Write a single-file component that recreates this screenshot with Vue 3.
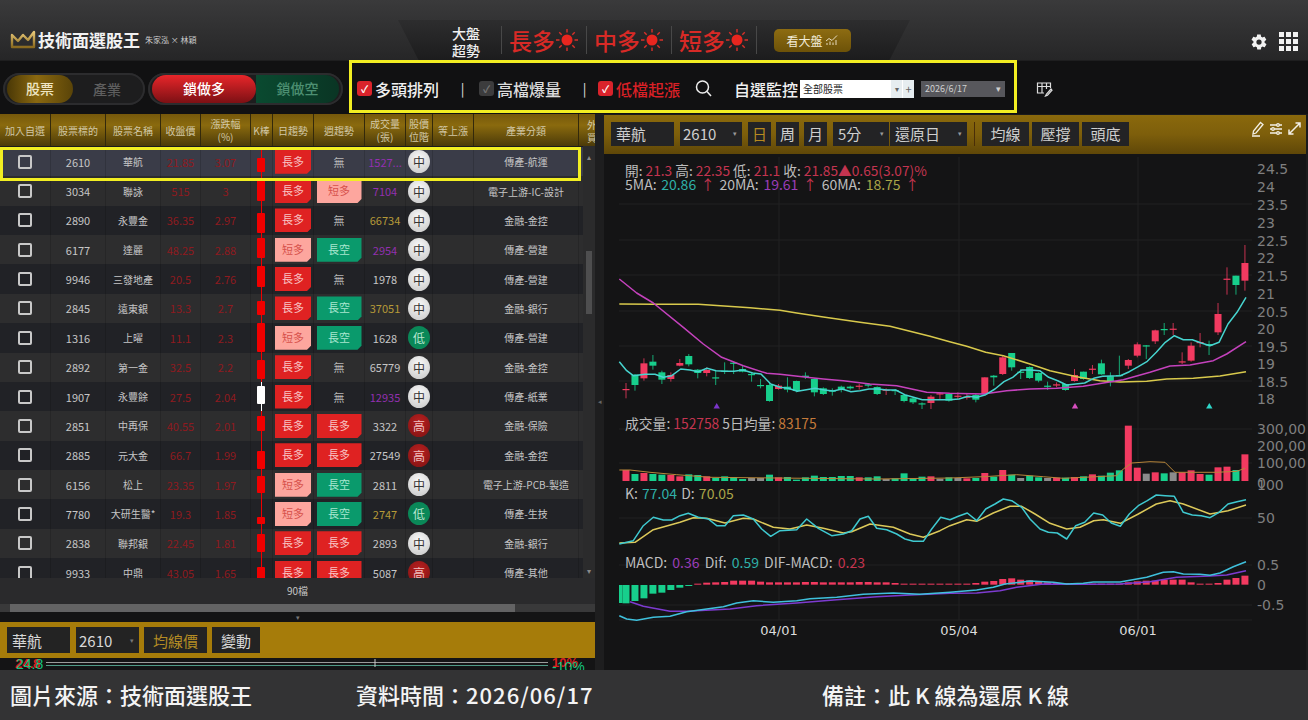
<script setup>
const rows = [
  { code: "2610", name: "華航", close: "21.85", pct: "3.07", k: [11, 14], day: "長多", week: "無", vol: "1527...", volc: "pu", pos: "中", ind: "傳產-航運", sel: true },
  { code: "3034", name: "聯詠", close: "515", pct: "3", k: [4, 21], day: "長多", week: "短多", vol: "7104", volc: "pu", pos: "中", ind: "電子上游-IC-設計" },
  { code: "2890", name: "永豐金", close: "36.35", pct: "2.97", k: [7, 20], day: "長多", week: "無", vol: "66734", volc: "go", pos: "中", ind: "金融-金控" },
  { code: "6177", name: "達麗", close: "48.25", pct: "2.88", k: [3, 20], day: "短多", week: "長空", vol: "2954", volc: "pu", pos: "中", ind: "傳產-營建" },
  { code: "9946", name: "三發地產", close: "20.5", pct: "2.76", k: [2, 21], day: "長多", week: "無", vol: "1978", volc: "", pos: "中", ind: "傳產-營建" },
  { code: "2845", name: "遠東銀", close: "13.3", pct: "2.7", k: [7, 14], day: "長多", week: "長空", vol: "37051", volc: "go", pos: "中", ind: "金融-銀行" },
  { code: "1316", name: "上曜", close: "11.1", pct: "2.3", k: [0, 29], day: "短多", week: "長空", vol: "1628", volc: "", pos: "低", ind: "傳產-營建" },
  { code: "2892", name: "第一金", close: "32.5", pct: "2.2", k: [7, 19], day: "長多", week: "無", vol: "65779", volc: "", pos: "中", ind: "金融-金控" },
  { code: "1907", name: "永豐餘", close: "27.5", pct: "2.04", k: [4, 18], white: true, day: "長多", week: "無", vol: "12935", volc: "pu", pos: "中", ind: "傳產-紙業" },
  { code: "2851", name: "中再保", close: "40.55", pct: "2.01", k: [5, 15], day: "長多", week: "長多", vol: "3322", volc: "", pos: "高", ind: "金融-保險" },
  { code: "2885", name: "元大金", close: "66.7", pct: "1.99", k: [10, 18], day: "長多", week: "長多", vol: "27549", volc: "", pos: "高", ind: "金融-金控" },
  { code: "6156", name: "松上", close: "23.35", pct: "1.97", k: [6, 17], day: "短多", week: "長空", vol: "2811", volc: "", pos: "中", ind: "電子上游-PCB-製造" },
  { code: "7780", name: "大研生醫*", close: "19.3", pct: "1.85", k: [18, 7], day: "短多", week: "長空", vol: "2747", volc: "go", pos: "低", ind: "傳產-生技" },
  { code: "2838", name: "聯邦銀", close: "22.45", pct: "1.81", k: [5, 18], day: "長多", week: "長多", vol: "2893", volc: "", pos: "中", ind: "金融-銀行" },
  { code: "9933", name: "中鼎", close: "43.05", pct: "1.65", k: [9, 20], day: "長多", week: "長多", vol: "5087", volc: "", pos: "高", ind: "傳產-其他" },
];
const heads = ["加入自選", "股票標的", "股票名稱", "收盤價", "漲跌幅\n(%)", "K棒", "日趨勢", "週趨勢", "成交量\n(張)", "股價\n位階", "等上漲", "產業分類"];
const badgeClass = { 長多: "b-red", 短多: "b-pink", 長空: "b-green" };
const posClass = { 中: "p-mid", 低: "p-low", 高: "p-high" };

const markets = ["長多", "中多", "短多"];
const rays = [0, 45, 90, 135, 180, 225, 270, 315];

// 座標都是從截圖量的，x = 626 + 8.97 * i
const barX = (i) => 626 + 8.97 * i;
const candleData = [
  ["r", 462, 480, 482, 508], ["g", 435, 437, 468, 485], ["r", 388, 403, 448, 455], ["g", 378, 398, 410, 422],
  ["g", 425, 430, 452, 465], ["r", 430, 438, 450, 458], ["r", 390, 402, 410, 412], ["g", 375, 381, 406, 412],
  ["g", 420, 422, 432, 448], ["r", 415, 423, 432, 442], ["g", 425, 445, 448, 468], ["g", 400, 425, 428, 435],
  ["g", 398, 401, 404, 435], ["g", 408, 420, 428, 430], ["g", 430, 435, 438, 458], ["g", 450, 468, 470, 478],
  ["g", 462, 468, 516, 518], ["r", 465, 470, 480, 482], ["g", 445, 473, 482, 490], ["g", 455, 456, 486, 490],
  ["g", 430, 440, 444, 450], ["g", 448, 450, 490, 502], ["g", 475, 478, 495, 498], ["g", 478, 484, 488, 500],
  ["g", 470, 473, 480, 490], ["g", 470, 473, 478, 482], ["r", 465, 470, 473, 482], ["g", 462, 466, 470, 475],
  ["g", 472, 474, 495, 498], ["r", 478, 482, 485, 498], ["g", 480, 483, 486, 498], ["g", 495, 498, 516, 520],
  ["g", 505, 508, 520, 525], ["g", 520, 523, 525, 540], ["r", 498, 503, 522, 540], ["r", 490, 493, 495, 510],
  ["g", 492, 495, 515, 518], ["r", 490, 500, 502, 510], ["r", 495, 503, 505, 512], ["g", 495, 498, 512, 520],
  ["r", 445, 445, 495, 497], ["g", 438, 440, 445, 470], ["r", 378, 385, 435, 438], ["g", 372, 372, 415, 425],
  ["g", 420, 428, 430, 450], ["g", 412, 414, 447, 450], ["g", 430, 432, 455, 460], ["g", 458, 470, 472, 483],
  ["r", 460, 466, 468, 475], ["g", 465, 465, 483, 485], ["r", 420, 438, 456, 458], ["g", 428, 428, 450, 452],
  ["r", 408, 419, 421, 435], ["g", 392, 403, 436, 437], ["g", 430, 442, 458, 472], ["g", 380, 438, 440, 440],
  ["r", 390, 393, 410, 420], ["r", 340, 346, 380, 385], ["g", 348, 349, 351, 390], ["r", 302, 304, 337, 345],
  ["g", 282, 300, 302, 318], ["r", 282, 299, 301, 318], ["r", 370, 397, 399, 405], ["r", 340, 350, 395, 398],
  ["r", 312, 339, 341, 355], ["g", 335, 345, 350, 378], ["r", 222, 255, 310, 318], ["r", 115, 149, 151, 197],
  ["g", 140, 140, 168, 197], ["r", 48, 102, 155, 185],
];
const colorOf = { r: "#f23a60", g: "#17cf8c", a: "#8b8b8b" };
const candles = candleData.map((d, i) => ({
  x: barX(i),
  c: colorOf[d[0]],
  wt: 230 + d[1] / 3,
  wb: 230 + d[4] / 3,
  bt: 230 + d[2] / 3,
  h: Math.max(1.2, (d[3] - d[2]) / 3),
}));

const volTop = [183, 195, 192, 195, 197, 198, 202, 196, 198, 202, 207, 202, 204, 210, 207, 207, 197, 205, 204, 212, 205, 200, 204, 204, 201, 201, 205, 205, 202, 210, 208, 193, 207, 203, 202, 209, 205, 207, 208, 207, 192, 203, 183, 197, 207, 200, 205, 207, 206, 206, 204, 202, 196, 200, 191, 184, 50, 176, 194, 190, 193, 190, 190, 184, 195, 197, 175, 173, 183, 136];
const volKinds = "rgrggrrggr" + "ggggaagrgg" + "ggggggrgga" + "ggggragarg" + "rgrgaggarg" + "rgrgggrrar" + "garrrgrrgr";
const vols = volTop.map((t, i) => ({
  x: barX(i),
  y: 410 + t / 3,
  h: 72 - t / 3,
  c: colorOf[volKinds[i]],
}));

const macdTop = [582, 575, 567, 553, 550, 542, 535, 530, 524, 521, 520, 519, 515, 515, 515, 518, 520, 520, 520, 520, 519, 519, 520, 520, 520, 520, 519, 519, 520, 520, 522, 524, 524, 524, 524, 524, 524, 524, 524, 522, 518, 516, 510, 508, 512, 514, 518, 520, 522, 522, 524, 524, 524, 524, 524, 524, 520, 517, 515, 515, 512, 512, 512, 520, 524, 524, 522, 512, 507, 500];
const macdBars = macdTop.map((t, i) => {
  const base = 527;
  const up = t < base;
  return {
    x: barX(i),
    y: 410 + (up ? t : 528) / 3,
    h: Math.abs(t - base) / 3,
    c: up ? "#f23a60" : "#17cf8c",
  };
});

// 兩段量測點接起來
const line = (left, right, y0) =>
  [...left.map((p) => [610 + p[0] / 3, y0 + p[1] / 3]), ...right.map((p) => [950 + p[0] / 3, y0 + p[1] / 3])]
    .map((p) => p[0].toFixed(1) + "," + p[1].toFixed(1))
    .join(" ");

const ma60 = line(
  [[28, 225], [130, 226], [265, 226], [420, 236], [510, 244], [560, 252], [640, 264], [750, 280], [840, 292], [960, 322], [1019, 338]],
  [[50, 352], [107, 370], [160, 380], [240, 405], [300, 425], [380, 443], [450, 455], [510, 459], [590, 457], [650, 450], [730, 448], [810, 441], [888, 428]],
  230
);
const ma20 = line(
  [[28, 150], [80, 192], [130, 222], [220, 295], [280, 345], [335, 385], [400, 410], [470, 433], [510, 436], [590, 445], [640, 450], [700, 455], [780, 465], [860, 470], [950, 490], [1019, 493]],
  [[100, 495], [170, 485], [240, 480], [320, 478], [400, 472], [460, 462], [520, 452], [600, 430], [660, 411], [720, 408], [790, 395], [830, 375], [888, 338]],
  230
);
const ma5 = line(
  [[28, 398], [50, 425], [70, 440], [105, 436], [135, 436], [160, 445], [185, 440], [212, 420], [240, 423], [265, 428], [291, 418], [318, 425], [345, 427], [372, 427], [399, 423], [428, 432], [453, 435], [482, 465], [510, 475], [535, 478], [562, 487], [589, 482], [615, 478], [643, 483], [670, 486], [696, 480], [723, 488], [750, 485], [777, 480], [804, 480], [830, 483], [857, 483], [884, 497], [937, 512], [964, 512], [992, 512], [1019, 512]],
  [[27, 510], [54, 502], [81, 505], [107, 497], [135, 480], [162, 458], [188, 445], [215, 423], [242, 423], [269, 425], [296, 445], [323, 455], [350, 468], [377, 465], [404, 462], [431, 448], [458, 442], [484, 441], [511, 440], [538, 428], [565, 413], [592, 397], [619, 370], [646, 340], [673, 320], [700, 332], [727, 332], [754, 342], [780, 350], [807, 340], [834, 285], [861, 250], [888, 205]],
  230
);
const volMa = line(
  [[28, 183], [60, 183], [120, 190], [200, 197], [300, 205], [500, 207], [800, 210], [1019, 207]],
  [[100, 203], [200, 197], [280, 203], [340, 208], [500, 200], [520, 180], [545, 162], [600, 158], [645, 160], [675, 190], [800, 190], [860, 187], [885, 178]],
  410
);
const kLine = line(
  [[28, 405], [70, 395], [100, 350], [130, 325], [160, 333], [185, 333], [210, 320], [235, 313], [265, 325], [295, 330], [320, 350], [345, 350], [370, 320], [400, 318], [430, 330], [455, 360], [482, 382], [510, 365], [560, 362], [590, 330], [625, 358], [665, 380], [700, 375], [725, 365], [750, 330], [775, 322], [800, 358], [830, 362], [860, 375], [885, 390], [910, 397], [940, 397], [965, 360], [992, 325], [1020, 332]],
  [[25, 322], [52, 312], [80, 335], [107, 300], [135, 285], [160, 270], [185, 275], [215, 295], [240, 330], [270, 360], [295, 370], [322, 372], [350, 390], [377, 350], [404, 340], [431, 312], [458, 318], [484, 342], [511, 352], [538, 315], [565, 290], [592, 275], [619, 258], [646, 260], [673, 262], [700, 310], [727, 318], [754, 320], [780, 326], [807, 310], [834, 285], [861, 278], [888, 272]],
  410
);
const dLine = line(
  [[28, 402], [75, 400], [130, 362], [210, 340], [250, 326], [290, 328], [345, 342], [400, 328], [430, 330], [490, 355], [540, 360], [590, 348], [640, 358], [700, 372], [725, 368], [780, 345], [850, 355], [900, 375], [940, 385], [990, 365], [1020, 350]],
  [[50, 332], [80, 337], [130, 312], [180, 292], [215, 292], [255, 315], [300, 343], [350, 360], [390, 355], [431, 335], [460, 332], [511, 343], [565, 315], [619, 285], [660, 275], [700, 285], [780, 315], [834, 305], [888, 288]],
  410
);
const difLine = line(
  [[28, 620], [50, 630], [80, 634], [130, 625], [180, 622], [230, 608], [290, 600], [340, 593], [380, 582], [430, 575], [490, 580], [560, 575], [600, 569], [680, 565], [760, 556], [850, 552], [930, 556], [1020, 550]],
  [[80, 543], [130, 535], [165, 525], [240, 516], [310, 520], [350, 525], [400, 523], [430, 519], [510, 519], [590, 505], [640, 490], [670, 488], [700, 495], [750, 496], [780, 499], [810, 492], [850, 473], [888, 458]],
  410
);
const macdLine = line(
  [[60, 578], [100, 592], [180, 607], [230, 607], [360, 600], [440, 590], [560, 582], [680, 572], [800, 563], [900, 558], [1020, 553]],
  [[80, 552], [150, 545], [200, 535], [280, 525], [400, 526], [510, 525], [600, 518], [680, 505], [780, 501], [830, 498], [888, 485]],
  410
);

const gridY = [205, 241, 276, 312, 347, 382, 430, 464, 519, 566, 606, 621];
const gridX = [779, 959, 1138];
const priceLabels = [
  ["24.5", 175], ["24", 193], ["23.5", 211], ["23", 229], ["22.5", 247], ["22", 264], ["21.5", 282], ["21", 300],
  ["20.5", 318], ["20", 335], ["19.5", 353], ["19", 370], ["18.5", 388], ["18", 405],
];
const otherLabels = [
  ["300,000", 435], ["200,000", 452], ["100,000", 469], ["0", 489], ["100", 491], ["50", 524], ["0.5", 571], ["0", 591], ["-0.5", 611],
];
</script>

<template>
  <div class="page">
    <header class="top">
      <div class="logo">
        <svg class="crown" width="26" height="20" viewBox="0 0 26 20">
          <defs>
            <linearGradient id="gold" x1="0" y1="0" x2="0" y2="1">
              <stop offset="0" stop-color="#e8c877" />
              <stop offset="1" stop-color="#8a6a1f" />
            </linearGradient>
          </defs>
          <path d="M2 5l6 6 5-6 5 5 6-8v15H2z" fill="none" stroke="url(#gold)" stroke-width="2.4" stroke-linejoin="round" />
        </svg>
        <span class="logo-name">技術面選股王</span>
        <span class="logo-sub">朱家泓 × 林穎</span>
      </div>
      <div class="market">
        <div class="market-title">大盤<br />超勢</div>
        <template v-for="m in markets" :key="m">
          <div class="market-item">
            <span>{{ m }}</span>
            <svg width="24" height="24" viewBox="0 0 24 24">
              <circle cx="12" cy="12" r="5.5" fill="#e8261f" />
              <line v-for="r in rays" :key="r" x1="12" y1="1" x2="12" y2="4.5" stroke="#d8302a" stroke-width="1.4" :transform="`rotate(${r} 12 12)`" />
            </svg>
          </div>
        </template>
        <button class="see-market">
          看大盤
          <svg width="14" height="11" viewBox="0 0 14 11" fill="none" stroke="#e8dcc0" stroke-width="1">
            <path d="M1 6l3-2.500 3 2 5-5M2 10V8M5 10V6.500M8 10V7.500M11 10V5" />
          </svg>
        </button>
      </div>
      <div class="top-icons">
        <svg width="18" height="18" viewBox="0 0 24 24" fill="#f2f2f2">
          <path d="M19.400 13c.1-.3.1-.7.1-1s0-.7-.1-1l2.100-1.600c.2-.2.2-.4.1-.6l-2-3.500c-.1-.2-.4-.3-.6-.2l-2.500 1c-.5-.4-1.100-.7-1.700-1l-.4-2.600c0-.3-.2-.5-.5-.5h-4c-.3 0-.5.2-.5.500l-.4 2.600c-.6.3-1.200.6-1.700 1l-2.500-1c-.2-.1-.5 0-.6.200l-2 3.500c-.1.2-.1.4.1.6L4.600 11c-.1.3-.1.700-.1 1s0 .7.1 1l-2.100 1.600c-.2.2-.2.4-.1.6l2 3.500c.1.2.4.3.6.2l2.500-1c.5.4 1.100.7 1.700 1l.4 2.600c0 .3.2.5.5.5h4c.3 0 .5-.2.5-.5l.4-2.600c.6-.3 1.200-.6 1.700-1l2.500 1c.2.1.5 0 .6-.2l2-3.500c.1-.2.1-.4-.1-.6zM12 15.500a3.500 3.500 0 1 1 0-7 3.500 3.500 0 0 1 0 7z" />
        </svg>
        <div class="apps"><i v-for="n in 9" :key="n"></i></div>
      </div>
    </header>

    <div class="toolbar">
      <div class="pill pill-stock">
        <span class="pill-on gold">股票</span>
        <span class="pill-off">產業</span>
      </div>
      <div class="pill pill-lock">
        <span class="pill-on red">鎖做多</span>
        <span class="pill-off green">鎖做空</span>
      </div>
      <div class="filters">
        <label class="chk"><i class="box on">✓</i>多頭排列</label>
        <span class="bar">|</span>
        <label class="chk grey"><i class="box off">✓</i>高檔爆量</label>
        <span class="bar">|</span>
        <label class="chk redtext"><i class="box on">✓</i>低檔起漲</label>
        <svg class="search" width="17" height="17" viewBox="0 0 17 17" fill="none" stroke="#eee" stroke-width="1.500">
          <circle cx="7.500" cy="7" r="6" />
          <path d="M12 11.500l4 4.500" />
        </svg>
        <span class="watch">自選監控</span>
        <div class="watch-select">
          <span>全部股票</span>
          <i class="spin">▾</i>
          <i class="spin plus">+</i>
        </div>
        <div class="date-select"><span>2026/6/17</span><i>▾</i></div>
      </div>
      <svg class="table-edit" width="17" height="16" viewBox="0 0 17 16" fill="none" stroke="#ddd" stroke-width="1.200">
        <path d="M8 12H1.500V2h13v5M1.500 5.500h13M6 2v10M10.500 2v6M15 8l-4.500 5-1 2 2-.8 4.500-5z" />
      </svg>
      <div class="yellow-box"></div>
    </div>

    <main class="main">
      <section class="left">
        <div class="table-wrap">
          <div class="thead">
            <div v-for="h in heads" :key="h" class="th">{{ h }}</div>
            <div class="th th-cut">外<br />買</div>
          </div>
          <div class="tbody-area">
            <div class="tbody">
              <div v-for="r in rows" :key="r.code" class="tr" :class="{ sel: r.sel }">
                <div class="td"><i class="row-check"></i></div>
                <div class="td">{{ r.code }}</div>
                <div class="td name">{{ r.name }}</div>
                <div class="td up">{{ r.close }}</div>
                <div class="td up">{{ r.pct }}</div>
                <div class="td kcell">
                  <i class="wick" :class="{ white: r.white }"></i>
                  <i class="kbody" :class="{ white: r.white }" :style="{ top: r.k[0] + 'px', height: r.k[1] + 'px' }"></i>
                </div>
                <div class="td"><span class="badge day" :class="badgeClass[r.day]">{{ r.day }}</span></div>
                <div class="td">
                  <span v-if="badgeClass[r.week]" class="badge wk" :class="badgeClass[r.week]">{{ r.week }}</span>
                  <span v-else class="none">{{ r.week }}</span>
                </div>
                <div class="td vol" :class="r.volc">{{ r.vol }}</div>
                <div class="td"><span class="pos" :class="posClass[r.pos]">{{ r.pos }}</span></div>
                <div class="td"></div>
                <div class="td ind">{{ r.ind }}</div>
              </div>
            </div>
            <div class="vscroll">
              <span class="arrow">▴</span>
              <i class="vthumb"></i>
              <span class="arrow">▾</span>
            </div>
            <div class="yellow-row"></div>
          </div>
        </div>
        <div class="count">90檔</div>
        <div class="hscroll"><i></i></div>
        <div class="split">▾</div>
        <div class="mini-bar">
          <span class="mini-box name-box">華航</span>
          <span class="mini-box code-box">2610<i>▾</i></span>
          <span class="mini-box price-btn">均線價</span>
          <span class="mini-box change-btn">變動</span>
        </div>
        <svg class="mini-chart" width="595" height="12" viewBox="0 658 595 12">
          <line x1="46" y1="662.500" x2="548" y2="662.500" stroke="#9b9b9b" />
          <line x1="46" y1="665.500" x2="548" y2="665.500" stroke="#4f9a86" />
          <line x1="375" y1="659" x2="375" y2="667" stroke="#ccc" />
          <text x="15" y="668" class="mini-red">24.8</text>
          <text x="16" y="669" class="mini-green">24.8</text>
          <text x="552" y="667" class="mini-red">10%</text>
          <text x="552" y="672" class="mini-green">-10%</text>
        </svg>
      </section>

      <div class="gutter"><span>◂</span></div>

      <section class="right">
        <div class="chart-bar">
          <span class="gbox g-name">華航</span>
          <span class="gbox g-code">2610<i>▾</i></span>
          <span class="gbox g-d on">日</span>
          <span class="gbox g-d">周</span>
          <span class="gbox g-d">月</span>
          <span class="gbox g-sel g-5">5分<i>▾</i></span>
          <span class="gbox g-sel g-re">還原日<i>▾</i></span>
          <span class="g-line"></span>
          <span class="gbox g-btn">均線</span>
          <span class="gbox g-btn">壓撐</span>
          <span class="gbox g-btn">頭底</span>
          <div class="g-icons">
            <svg width="14" height="16" viewBox="0 0 14 16" fill="none" stroke="#f3f0e6" stroke-width="1.300"><path d="M9.500 1.500l2.500 2L5 12l-3 1 .5-3zM1 15h8" /></svg>
            <svg width="14" height="14" viewBox="0 0 14 14" fill="none" stroke="#f3f0e6" stroke-width="1.300"><path d="M1 3h12M1 7h12M1 11h12" /><circle cx="9" cy="3" r="1.300" fill="#7d5e0b" /><circle cx="4" cy="7" r="1.300" fill="#7d5e0b" /><circle cx="9" cy="11" r="1.300" fill="#7d5e0b" /></svg>
            <svg width="15" height="15" viewBox="0 0 15 15" fill="none" stroke="#f3f0e6" stroke-width="1.500"><path d="M2 13L13 2M8.500 2H13v4.500M2 8.500V13h4.500" /></svg>
          </div>
        </div>
        <svg class="chart" width="702" height="515" viewBox="604 155 702 515">
          <line v-for="y in gridY" :key="'h' + y" x1="619" x2="1252" :y1="y" :y2="y" stroke="#212122" />
          <line v-for="x in gridX" :key="'v' + x" :x1="x" :x2="x" y1="158" y2="621" stroke="#212122" />

          <g v-for="(c, i) in candles" :key="'c' + i">
            <line :x1="c.x" :x2="c.x" :y1="c.wt" :y2="c.wb" :stroke="c.c" stroke-width="1" opacity="0.8" />
            <rect :x="c.x - 3.500" :y="c.bt" width="7" :height="c.h" :fill="c.c" />
          </g>
          <polyline :points="ma60" class="ln" stroke="#d8c94c" />
          <polyline :points="ma20" class="ln" stroke="#c542bd" />
          <polyline :points="ma5" class="ln" stroke="#47d4cf" />
          <path d="M716.700 404l3.200 5.500h-6.400z" fill="#7b35c9" />
          <path d="M1075 404l3.200 5.500h-6.400z" fill="#d84fc0" />
          <path d="M1209.300 404l3.200 5.500h-6.400z" fill="#2ed6c8" />

          <rect v-for="(b, i) in vols" :key="'v' + i" :x="b.x - 3.500" :y="b.y" width="7" :height="b.h" :fill="b.c" />
          <polyline :points="volMa" class="ln thin" stroke="#b8863a" />

          <polyline :points="dLine" class="ln" stroke="#dcc95a" />
          <polyline :points="kLine" class="ln" stroke="#3fc9d0" />

          <rect v-for="(b, i) in macdBars" :key="'m' + i" :x="b.x - 3.500" :y="b.y" width="7" :height="b.h" :fill="b.c" />
          <rect x="619" y="586" width="3.500" height="18" fill="#17cf8c" />
          <polyline :points="macdLine" class="ln" stroke="#7d3bd0" />
          <polyline :points="difLine" class="ln" stroke="#3fc0dc" />

          <text x="625" y="177" class="lg narrow">開: <tspan class="c-red">21.3</tspan> 高: <tspan class="c-red">22.35</tspan> 低: <tspan class="c-red">21.1</tspan> 收: <tspan class="c-red">21.85▲0.65(3.07)%</tspan></text>
          <text x="625" y="191" class="lg wide">5MA: <tspan class="c-cyan">20.86</tspan> <tspan class="c-red">↑</tspan> 20MA: <tspan class="c-pur">19.61</tspan> <tspan class="c-red">↑</tspan> 60MA: <tspan class="c-yel">18.75</tspan> <tspan class="c-red">↑</tspan></text>
          <text x="625" y="430" class="lg vol-lg">成交量: <tspan class="c-red">152758</tspan> 5日均量: <tspan class="c-org">83175</tspan></text>
          <text x="625" y="500" class="lg">K: <tspan class="c-cyan">77.04</tspan> D: <tspan class="c-yel">70.05</tspan></text>
          <text x="625" y="569" class="lg macd-lg">MACD: <tspan class="c-pur">0.36</tspan> Dif: <tspan class="c-cyan">0.59</tspan> DIF-MACD: <tspan class="c-red">0.23</tspan></text>

          <text v-for="p in priceLabels" :key="p[0]" x="1257" :y="p[1]" class="ax">{{ p[0] }}</text>
          <text v-for="p in otherLabels" :key="p[0] + p[1]" x="1257" :y="p[1]" class="ax">{{ p[0] }}</text>
          <text x="779" y="636" class="dt">04/01</text>
          <text x="959" y="636" class="dt">05/04</text>
          <text x="1138" y="636" class="dt">06/01</text>
        </svg>
      </section>
    </main>

    <footer class="caption">
      <span class="cap-a">圖片來源：技術面選股王</span>
      <span class="cap-b">資料時間：<span class="cap-num">2026/06/17</span></span>
      <span class="cap-c">備註：此 K 線為還原 K 線</span>
    </footer>
  </div>
</template>

<style scoped>
.page {
  width: 1308px;
  height: 720px;
  overflow: hidden;
  display: flex;
  flex-direction: column;
  background: #1b1b1c;
  color: #ddd;
  font-family: "Noto Sans CJK TC", "Liberation Sans", sans-serif;
}
i {
  font-style: normal;
}

/* 頂部 */
.top {
  height: 60px;
  flex: none;
  display: flex;
  background: linear-gradient(#3a3a3b, #262627);
}
.logo {
  width: 398px;
  flex: none;
  display: flex;
  align-items: center;
  padding: 19px 0 0 10px;
  box-sizing: border-box;
}
.crown {
  margin-right: 2px;
}
.logo-name {
  font-size: 17px;
  font-weight: 700;
  color: #f2f2f2;
  white-space: nowrap;
}
.logo-sub {
  margin-left: 5px;
  font-size: 8px;
  color: #ccc;
  white-space: nowrap;
}
.market {
  width: 512px;
  height: 40px;
  margin-top: 20px;
  flex: none;
  display: flex;
  align-items: center;
  padding-left: 54px;
  box-sizing: border-box;
  background: linear-gradient(#2d2d2e, #1c1c1d);
  clip-path: polygon(0 0, 100% 0, 96% 100%, 4% 100%);
}
.market-title {
  width: 49px;
  font-size: 14px;
  line-height: 17px;
  color: #f0f0f0;
  font-weight: 500;
  margin-top: 3px;
}
.market-item {
  display: flex;
  align-items: center;
  height: 28px;
  padding: 0 7px;
  border-left: 1px solid #484848;
  font-size: 23px;
  line-height: 28px;
  color: #d82a26;
  font-weight: 500;
  white-space: nowrap;
}
.market-item:last-of-type {
  border-right: 1px solid #484848;
}
.see-market {
  margin-left: 17px;
  width: 77px;
  height: 23px;
  border: 0;
  border-radius: 5px;
  background: linear-gradient(#8d6c12, #6d5208);
  color: #f2ecd8;
  font: 12px "Noto Sans CJK TC", sans-serif;
  display: flex;
  align-items: center;
  justify-content: center;
  gap: 2px;
  padding: 0;
}
.top-icons {
  flex: 1;
  display: flex;
  align-items: center;
  justify-content: flex-end;
  gap: 11px;
  padding: 23px 10px 0 0;
}
.apps {
  display: grid;
  grid-template-columns: repeat(3, 5px);
  grid-auto-rows: 5px;
  gap: 2px;
}
.apps i {
  background: #f2f2f2;
}

/* 工具列 */
.toolbar {
  position: relative;
  height: 54px;
  flex: none;
  display: flex;
  align-items: center;
  background: #111112;
  border-top: 1px solid #1e1e1f;
  box-sizing: border-box;
  padding: 2px 0 0 3px;
}
.pill {
  height: 32px;
  border-radius: 16px;
  background: #1d1d1e;
  box-shadow: inset 0 0 0 2px #2c2c2e;
  display: flex;
  align-items: center;
  padding: 0 4px;
  box-sizing: border-box;
  font-size: 14px;
  font-weight: 500;
  flex: none;
}
.pill-stock {
  width: 142px;
}
.pill-lock {
  width: 195px;
  margin-left: 3px;
  margin-right: 8px;
}
.pill-on {
  height: 28px;
  line-height: 27px;
  text-align: center;
  border-radius: 14px;
  color: #fff;
}
.pill-off {
  flex: 1;
  text-align: center;
  color: #5e5e5e;
}
.gold {
  width: 66px;
  background: linear-gradient(90deg, #4a3806, #8a6810 45%, #5a4408);
  color: #efe6c4;
}
.red {
  width: 104px;
  background: linear-gradient(#e8262a, #7c1014);
}
.green {
  height: 28px;
  line-height: 27px;
  border-radius: 0 14px 14px 0;
  background: linear-gradient(90deg, #0a4a30, #0a3524);
  color: #4d8f72;
}
.filters {
  width: 665px;
  flex: none;
  display: flex;
  align-items: center;
  padding-left: 6px;
  box-sizing: border-box;
  font-size: 16px;
  font-weight: 500;
  white-space: nowrap;
}
.chk {
  display: flex;
  align-items: center;
  gap: 3px;
  color: #f0f0f0;
}
.chk.grey {
  color: #dcdcdc;
}
.chk.redtext {
  color: #d92026;
  margin-left: -3px;
}
.box {
  width: 15px;
  height: 15px;
  border-radius: 3px;
  font-size: 10px;
  font-weight: 700;
  line-height: 15px;
  text-align: center;
  color: #fff;
}
.box.on {
  background: #d9232b;
}
.box.off {
  background: #3c3c3d;
  color: #777;
}
.bar {
  width: 40px;
  padding-left: 7px;
  box-sizing: border-box;
  text-align: center;
  font-size: 13px;
  color: #cfcfcf;
}
.search {
  margin-left: 15px;
}
.watch {
  margin-left: 22px;
  color: #f0f0f0;
}
.watch-select {
  width: 114px;
  height: 18px;
  margin-left: 2px;
  background: #fff;
  color: #222;
  font-size: 10px;
  font-weight: 400;
  line-height: 18px;
  display: flex;
  padding-left: 3px;
  box-sizing: border-box;
}
.watch-select span {
  flex: 1;
}
.spin {
  width: 11px;
  background: #e6edf0;
  border-left: 1px solid #fff;
  color: #666;
  text-align: center;
  font-size: 8px;
}
.spin.plus {
  font-size: 11px;
}
.date-select {
  width: 84px;
  height: 16px;
  margin-left: 7px;
  background: #57575c;
  color: #cfcfcf;
  font-size: 9px;
  font-weight: 400;
  line-height: 16px;
  padding: 0 4px;
  box-sizing: border-box;
  display: flex;
  justify-content: space-between;
}
.table-edit {
  margin-left: 20px;
}
.yellow-box {
  position: absolute;
  left: 349px;
  top: -1px;
  width: 668px;
  height: 53px;
  border: 3px solid #f2ee22;
  box-sizing: border-box;
}

/* 左側表格 */
.main {
  flex: 1;
  min-height: 0;
  display: flex;
}
.left {
  width: 595px;
  flex: none;
  display: flex;
  flex-direction: column;
}
.table-wrap {
  height: 464px;
  flex: none;
  position: relative;
  overflow: hidden;
}
.thead {
  height: 32px;
  display: grid;
  grid-template-columns: 51px 55px 55px 40px 50px 22px 41px 51px 41px 27px 41px 105px 16px;
  background: linear-gradient(#75580b, #8a6a0e 35%, #4b3a09);
}
.th {
  display: flex;
  align-items: center;
  justify-content: center;
  text-align: center;
  white-space: pre-line;
  font-size: 10px;
  line-height: 13px;
  color: #d2c8a6;
  border-right: 1px solid #33290b;
}
.th-cut {
  display: block;
  padding: 4px 0 0 8px;
  text-align: left;
  border: 0;
  overflow: hidden;
}
.tbody-area {
  position: relative;
  height: 432px;
  padding-top: 1px;
  box-sizing: border-box;
  overflow: hidden;
}
.tbody {
  width: 583px;
  height: 431px;
  overflow: hidden;
}
.tr {
  height: 29.360px;
  display: grid;
  grid-template-columns: 51px 55px 55px 40px 50px 22px 41px 51px 41px 27px 41px 105px;
  background: #212226;
  font-size: 11px;
  color: #c6c6c6;
}
.tr:nth-child(even) {
  background: #2d2d2e;
}
.tr.sel {
  background: #3a3c48;
}
.td {
  position: relative;
  display: flex;
  align-items: center;
  justify-content: center;
  overflow: hidden;
  white-space: nowrap;
  border-right: 1px solid rgba(0, 0, 0, 0.14);
}
.row-check {
  width: 14px;
  height: 14px;
  border: 2px solid #c8c8c8;
  border-radius: 2px;
  box-sizing: border-box;
}
.name {
  font-size: 10px;
}
.up {
  color: #8f1a1f;
}
.kcell {
  overflow: visible;
}
.wick {
  position: absolute;
  left: 50%;
  top: 0;
  bottom: 0;
  width: 1.500px;
  margin-left: -1px;
  background: #f00000;
}
.kbody {
  position: absolute;
  left: 50%;
  width: 8px;
  margin-left: -4.500px;
  background: #f00000;
  border-radius: 1px;
}
.wick.white,
.kbody.white {
  background: #fff;
}
.badge {
  height: 24px;
  line-height: 23px;
  text-align: center;
  font-size: 11px;
  clip-path: polygon(0 0, 100% 0, 100% calc(100% - 4px), calc(100% - 4px) 100%, 0 100%);
}
.day {
  width: 36px;
}
.wk {
  width: 45px;
}
.b-red {
  background: #df2222;
  color: #f8c4c4;
}
.b-pink {
  background: #fda69e;
  color: #d6504a;
}
.b-green {
  background: #0a9a6c;
  color: #a8e6cf;
}
.none {
  font-size: 11px;
  color: #b8b8b8;
}
.vol {
  font-size: 11px;
}
.vol.pu {
  color: #9330b0;
}
.vol.go {
  color: #b69a38;
}
.pos {
  width: 22px;
  height: 23px;
  border-radius: 50%;
  text-align: center;
  line-height: 23px;
  font-size: 12px;
}
.p-mid {
  background: radial-gradient(circle at 50% 35%, #fafafa, #c4c4c4);
  color: #333;
}
.p-low {
  background: #0a8858;
  color: #b8e6d0;
}
.p-high {
  background: radial-gradient(circle at 50% 35%, #b82020, #7f1212);
  color: #f0c0c0;
}
.ind {
  font-size: 10px;
}
.vscroll {
  position: absolute;
  right: 0;
  top: 0;
  bottom: 0;
  width: 12px;
  background: #2b2b2c;
  color: #8a8a8a;
  font-size: 8px;
  text-align: center;
}
.arrow {
  position: absolute;
  left: 0;
  right: 0;
}
.arrow:first-child {
  top: 5px;
}
.arrow:last-child {
  bottom: 2px;
}
.vthumb {
  position: absolute;
  left: 3px;
  top: 105px;
  width: 6px;
  height: 63px;
  background: #4e4e4f;
}
.yellow-row {
  position: absolute;
  left: 0;
  top: 1px;
  width: 581px;
  height: 34px;
  border: 3px solid #f2ee22;
  box-sizing: border-box;
  pointer-events: none;
}
.count {
  height: 26px;
  flex: none;
  line-height: 26px;
  text-align: center;
  background: #2a2a2c;
  font-size: 10px;
  color: #c4c4c4;
}
.hscroll {
  height: 8px;
  flex: none;
  padding-left: 10px;
  background: #39393a;
}
.hscroll i {
  display: block;
  width: 505px;
  height: 8px;
  background: #636364;
}
.split {
  height: 10px;
  flex: none;
  text-align: center;
  font-size: 7px;
  line-height: 10px;
  color: #777;
  background: #141415;
}
.mini-bar {
  height: 36px;
  flex: none;
  background: #a67c0a;
  display: flex;
  align-items: center;
  padding-left: 7px;
}
.mini-box {
  height: 26px;
  line-height: 25px;
  background: #232323;
  color: #d8d8d8;
  font-size: 15px;
  box-sizing: border-box;
  display: inline-flex;
  align-items: center;
  justify-content: center;
}
.name-box {
  width: 63px;
  justify-content: flex-start;
  padding-left: 5px;
}
.code-box {
  width: 63px;
  margin-left: 6px;
  justify-content: space-between;
  padding: 0 5px 0 3px;
}
.code-box i {
  font-size: 7px;
  color: #777;
}
.price-btn {
  width: 63px;
  margin-left: 5px;
  color: #b48c24;
}
.change-btn {
  width: 48px;
  margin-left: 5px;
}
.mini-chart {
  display: block;
  background: #141415;
  flex: none;
}
.mini-red {
  fill: #d82020;
  font: 700 13px "Liberation Sans", sans-serif;
}
.mini-green {
  fill: #14c47e;
  font: 14px "Liberation Sans", sans-serif;
}

.gutter {
  width: 9px;
  flex: none;
  text-align: center;
  font-size: 7px;
  color: #666;
  padding-top: 282px;
  box-sizing: border-box;
  background: #1e1e1f;
}

/* 右側 K 線 */
.right {
  width: 702px;
  flex: none;
  background: #141415;
  display: flex;
  flex-direction: column;
  margin-top: 1px;
}
.chart-bar {
  height: 39px;
  flex: none;
  display: flex;
  align-items: center;
  padding: 0 0 2px 7px;
  box-sizing: border-box;
  background: linear-gradient(#8a690c, #7d5e0b 50%, #5f4708);
}
.gbox {
  height: 24px;
  background: #232325;
  color: #cfcfcf;
  font-size: 15px;
  line-height: 23px;
  box-sizing: border-box;
  display: inline-flex;
  align-items: center;
  justify-content: center;
  flex: none;
}
.gbox i {
  font-size: 7px;
  color: #999;
}
.g-name {
  width: 63px;
  justify-content: flex-start;
  padding-left: 5px;
}
.g-code {
  width: 62px;
  margin-left: 6px;
  justify-content: space-between;
  padding: 0 5px 0 3px;
}
.g-d {
  width: 23px;
  margin-left: 5px;
}
.g-d.on {
  color: #b78a20;
  margin-left: 6px;
}
.g-sel {
  justify-content: space-between;
  padding: 0 5px;
}
.g-5 {
  width: 56px;
  margin-left: 6px;
}
.g-re {
  width: 77px;
  margin-left: 1px;
}
.g-line {
  width: 1px;
  height: 24px;
  margin: 0 7px;
  background: #4a2e08;
}
.g-btn {
  width: 47px;
  margin-right: 3px;
}
.g-icons {
  margin-left: auto;
  display: flex;
  align-items: center;
  gap: 4px;
  padding-right: 4px;
  height: 100%;
  padding-bottom: 10px;
  box-sizing: border-box;
}
.chart {
  display: block;
}
.ln {
  fill: none;
  stroke-width: 1.500;
  stroke-linejoin: round;
}
.thin {
  stroke-width: 1;
}
.lg {
  font: 14px "Noto Sans CJK TC", "Liberation Sans", sans-serif;
  fill: #bdbdbd;
  word-spacing: 1px;
}
.lg.narrow {
  font-size: 13.700px;
  word-spacing: 0;
}
.lg.wide {
  word-spacing: 1.500px;
}
.lg.vol-lg {
  word-spacing: 0;
  font-size: 13.800px;
}
.lg.macd-lg {
  word-spacing: 2px;
}
.c-red {
  fill: #c43450;
}
.c-cyan {
  fill: #2fb0a8;
}
.c-pur {
  fill: #9a3db8;
}
.c-yel {
  fill: #aaa548;
}
.c-org {
  fill: #c47a3a;
}
.ax {
  font: 14px "DejaVu Sans", sans-serif;
  fill: #7f7f7f;
}
.dt {
  font: 13px "DejaVu Sans", sans-serif;
  fill: #ddd;
  text-anchor: middle;
}

/* 圖說 */
.caption {
  height: 50px;
  flex: none;
  display: flex;
  align-items: center;
  padding: 0 0 3px 10px;
  box-sizing: border-box;
  background: #333334;
  color: #f4f4f4;
  font-size: 22px;
  font-weight: 500;
  white-space: nowrap;
}
.cap-a {
  width: 346px;
}
.cap-b {
  width: 466px;
}
.cap-num {
  letter-spacing: 1px;
}
</style>
